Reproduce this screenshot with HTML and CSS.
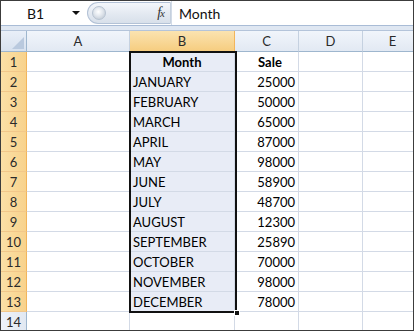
FILE: index.html
```html
<!DOCTYPE html>
<html>
<head>
<meta charset="utf-8">
<link rel="stylesheet" href="styles.css">
</head>
<body>
<div class="frame">
  <div class="fbar">
    <div class="namebox"><span class="ref">B1</span><span class="drop"></span></div>
    <div class="pill"><span class="knob"></span><span class="fx">f<i>x</i></span></div>
    <div class="formula">Month</div>
  </div>
  <div class="band"></div>
  <div class="sheet">
    <div class="grid">
      <div class="corner"><svg width="12" height="12" viewBox="0 0 12 12"><polygon points="12,0 12,12 0,12" fill="#b9c9de"/></svg></div>
      <div class="ch">A</div><div class="ch sel">B</div><div class="ch">C</div><div class="ch">D</div><div class="ch">E</div>

      <div class="rh sel">1</div><div class="c"></div><div class="c b hd">Month</div><div class="c n hd c2">Sale</div><div class="c"></div><div class="c"></div>
      <div class="rh sel">2</div><div class="c"></div><div class="c b">JANUARY</div><div class="c n">25000</div><div class="c"></div><div class="c"></div>
      <div class="rh sel">3</div><div class="c"></div><div class="c b">FEBRUARY</div><div class="c n">50000</div><div class="c"></div><div class="c"></div>
      <div class="rh sel">4</div><div class="c"></div><div class="c b">MARCH</div><div class="c n">65000</div><div class="c"></div><div class="c"></div>
      <div class="rh sel">5</div><div class="c"></div><div class="c b">APRIL</div><div class="c n">87000</div><div class="c"></div><div class="c"></div>
      <div class="rh sel">6</div><div class="c"></div><div class="c b">MAY</div><div class="c n">98000</div><div class="c"></div><div class="c"></div>
      <div class="rh sel">7</div><div class="c"></div><div class="c b">JUNE</div><div class="c n">58900</div><div class="c"></div><div class="c"></div>
      <div class="rh sel">8</div><div class="c"></div><div class="c b">JULY</div><div class="c n">48700</div><div class="c"></div><div class="c"></div>
      <div class="rh sel">9</div><div class="c"></div><div class="c b">AUGUST</div><div class="c n">12300</div><div class="c"></div><div class="c"></div>
      <div class="rh sel">10</div><div class="c"></div><div class="c b">SEPTEMBER</div><div class="c n">25890</div><div class="c"></div><div class="c"></div>
      <div class="rh sel">11</div><div class="c"></div><div class="c b">OCTOBER</div><div class="c n">70000</div><div class="c"></div><div class="c"></div>
      <div class="rh sel">12</div><div class="c"></div><div class="c b">NOVEMBER</div><div class="c n">98000</div><div class="c"></div><div class="c"></div>
      <div class="rh sel">13</div><div class="c"></div><div class="c b">DECEMBER</div><div class="c n">78000</div><div class="c"></div><div class="c"></div>
      <div class="rh">14</div><div class="c"></div><div class="c"></div><div class="c"></div><div class="c"></div><div class="c"></div>
    </div>
    <div class="selection"><span class="handle"></span></div>
  </div>
</div>
</body>
</html>
```
FILE: styles.css
```css
* { box-sizing: border-box; }
html, body { margin: 0; padding: 0; background: #fff; }
body { font-family: Lato, "Liberation Sans", sans-serif; color: #000; }
.frame {
  width: 414px; height: 331px; overflow: hidden;
  border: 1px solid #3c3c3c;
  display: flex; flex-direction: column;
  background: #fff;
}
.fbar {
  height: 25px; flex: none;
  display: flex; align-items: stretch;
  border-bottom: 1px solid #a9bcd6;
  background: #fff;
}
.namebox {
  width: 85px; flex: none;
  display: flex; align-items: center;
  padding-left: 26px; position: relative;
  font-size: 14px; color: #111;
}
.namebox .ref { flex: 1; }
.drop {
  width: 0; height: 0; margin-right: 6px;
  border-left: 4px solid transparent; border-right: 4px solid transparent;
  border-top: 4px solid #111;
}
.pill {
  width: 84px; flex: none; margin: 1px 0 1px 1px;
  border: 1px solid #b3c2d6; border-right: 1px solid #c5d0de;
  border-radius: 12px 0 0 12px;
  background: linear-gradient(#f4f7fb, #e3e9f1 55%, #d8e0ea);
  display: flex; align-items: center; justify-content: space-between;
  padding: 0 6px 0 4px;
}
.knob {
  width: 14px; height: 14px; border-radius: 50%;
  background: radial-gradient(circle at 45% 40%, #ffffff 0, #e4e9ef 40%, #b6c0cc 100%);
  border: 1px solid #b7c3d1;
}
.fx {
  font-family: "Liberation Serif", serif; font-style: italic;
  font-size: 14px; color: #333; letter-spacing: -1px;
}
.fx i { font-size: 11px; }
.formula {
  flex: 1; display: flex; align-items: center;
  padding-left: 7px; font-size: 14px; color: #111;
  border-left: 1px solid #d2dbe7;
}
.band {
  height: 5px; flex: none;
  background: #dfe7f2;
  border-bottom: 1px solid #b4c4da;
}
.sheet { position: relative; flex: 1; }
.grid {
  display: grid;
  grid-template-columns: 26px 103px 105px 64px 64px 60px;
  grid-template-rows: 21px repeat(14, 20px);
  font-size: 13px;
}
.corner {
  background: linear-gradient(#e9eff8, #d7e1ee);
  border-right: 1px solid #9eb6ce; border-bottom: 1px solid #9eb6ce;
  display: flex; align-items: flex-end; justify-content: flex-end;
  padding: 0 2px 2px 0;
}
.ch {
  background: linear-gradient(#f1f5fb, #e2e9f3);
  border-right: 1px solid #c5d1e0; border-bottom: 1px solid #9eb6ce;
  display: flex; align-items: center; justify-content: center;
  color: #2a2a2a; font-size: 13px;
}
.ch.sel {
  background: linear-gradient(#fbe3b0, #f6cd80);
  border-right-color: #f2b55c; border-bottom-color: #f2b55c;
}
.rh {
  background: linear-gradient(90deg, #eef3fa, #e1e8f2);
  border-right: 1px solid #9eb6ce; border-bottom: 1px solid #c5d1e0;
  display: flex; align-items: center; justify-content: center;
  color: #2a2a2a; font-size: 13px;
}
.rh.sel {
  background: linear-gradient(90deg, #fbe0a6, #f8d28c);
  border-right-color: #f2b55c; border-bottom-color: #f2c78a;
}
.c {
  border-right: 1px solid #d3dae6; border-bottom: 1px solid #d3dae6;
  display: flex; align-items: center; padding: 0 3px;
  white-space: nowrap;
}
.c.b { background: #e8ecf6; }
.c.n { justify-content: flex-end; }
.c.hd { font-weight: bold; justify-content: center; }
.c.n.hd { justify-content: center; padding-left: 10px; }
.selection {
  position: absolute; left: 128px; top: 20px;
  width: 108px; height: 262px;
  border: 2px solid #111;
  pointer-events: none;
}
.handle {
  position: absolute; right: -5px; bottom: -5px;
  width: 6px; height: 6px; background: #111;
  border: 1px solid #fff;
}
```
